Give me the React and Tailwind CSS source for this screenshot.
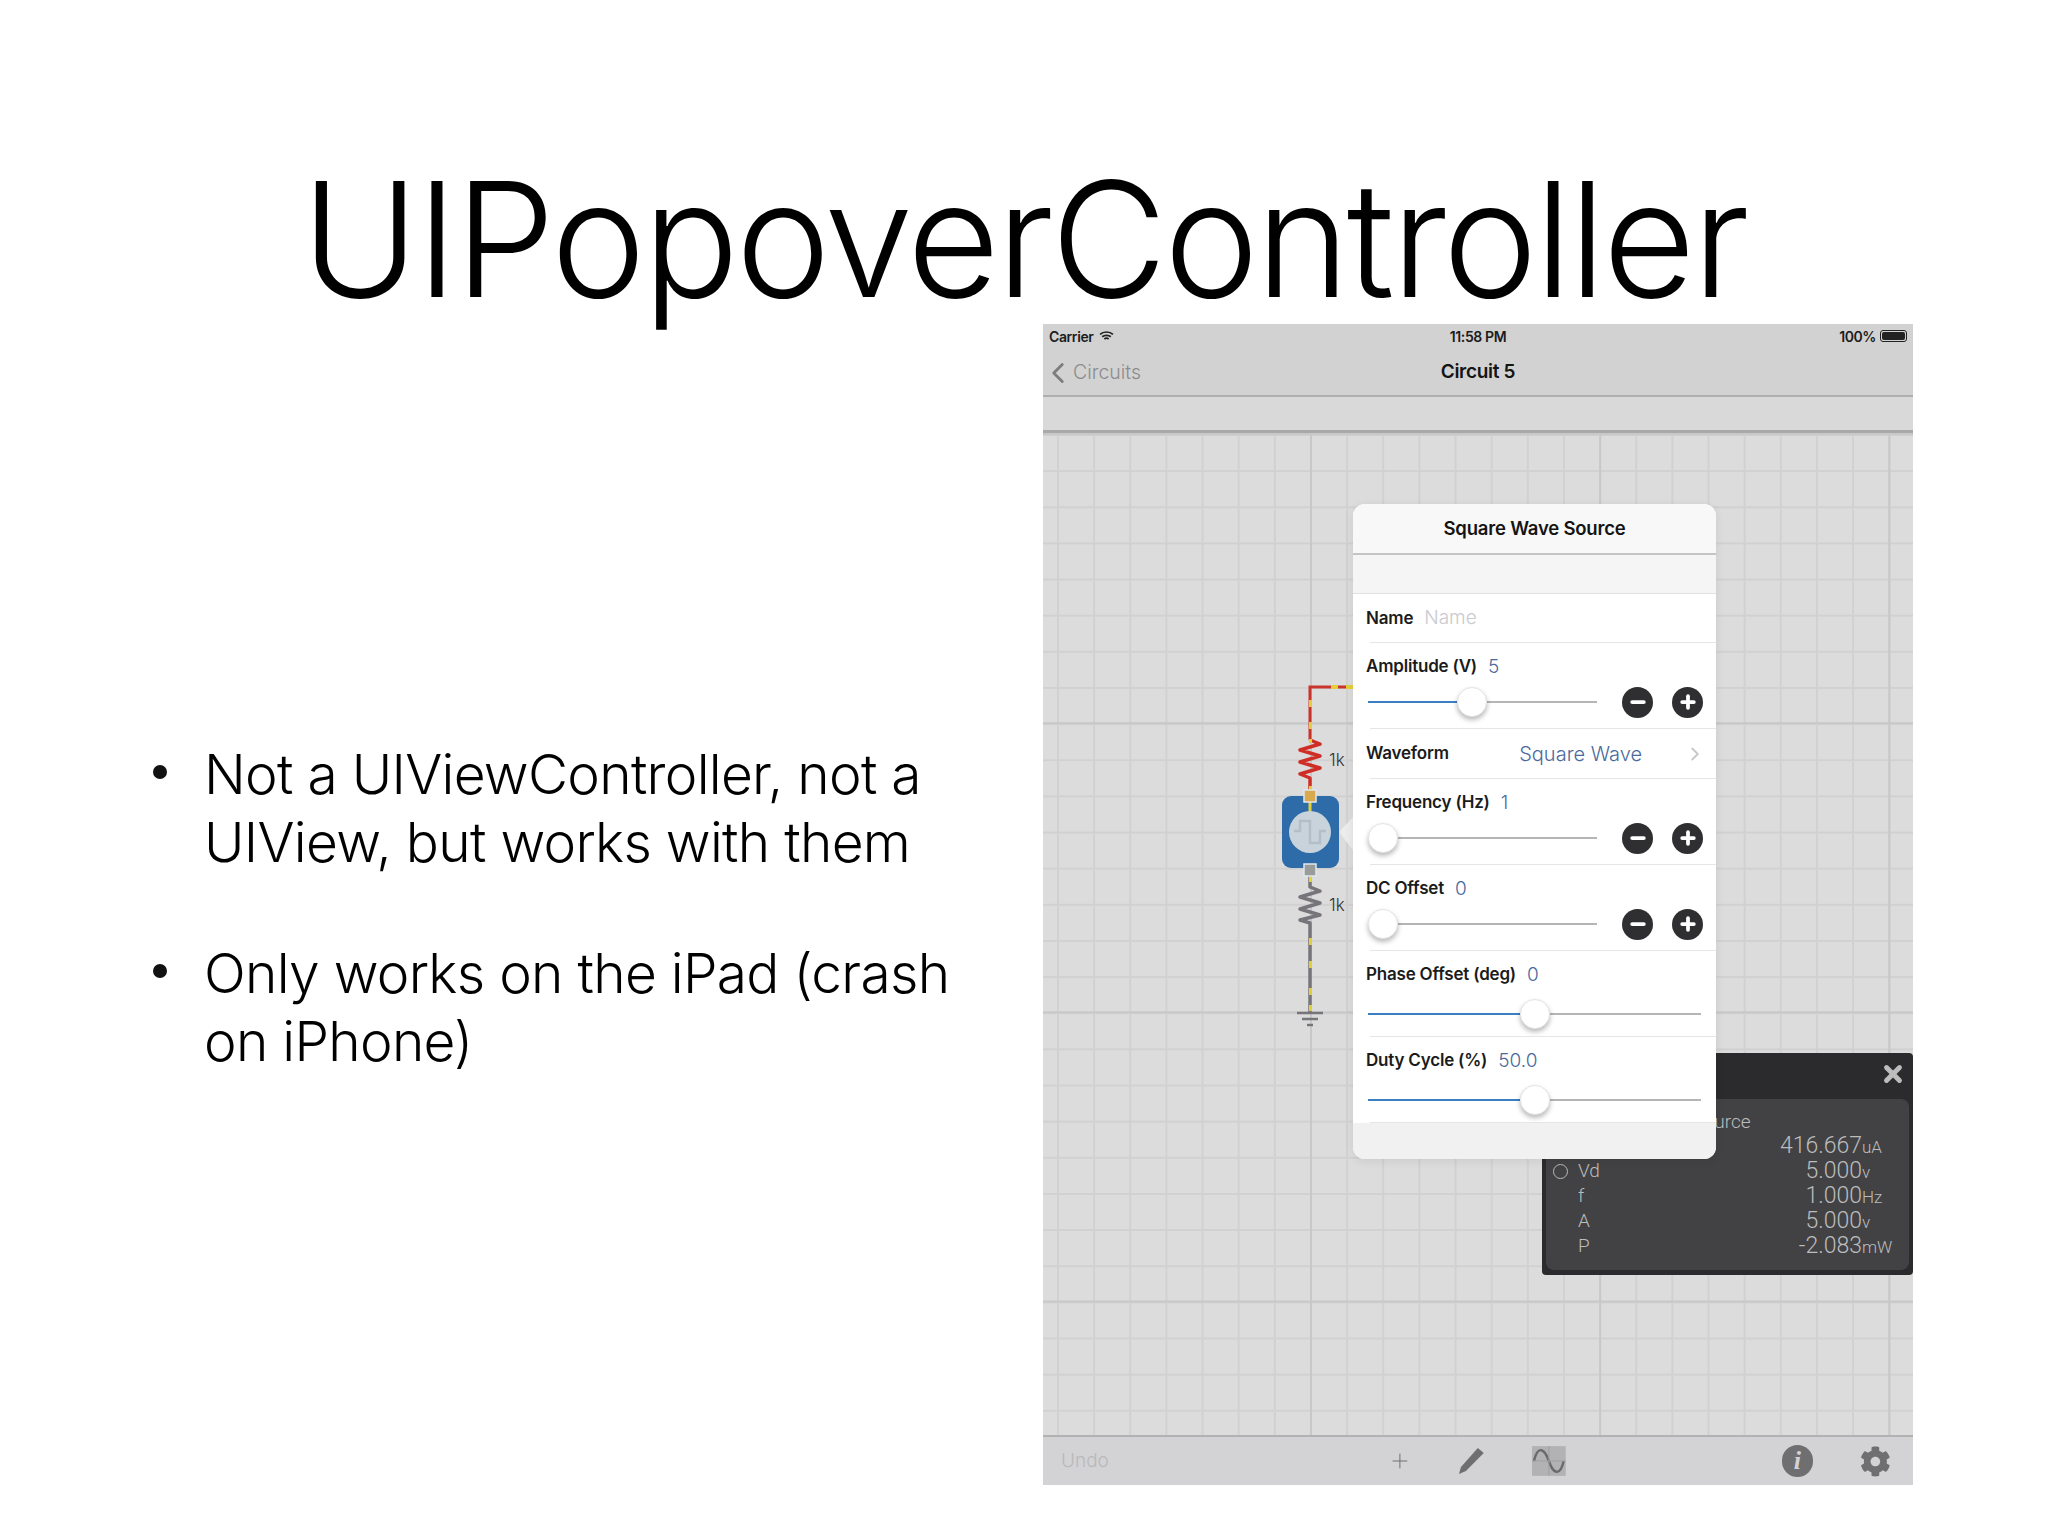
import React from 'react';
import { ChevronLeft, ChevronRight, Minus, Plus, X } from 'lucide-react';
import { FaCog } from 'react-icons/fa';

const light = "font-['Inter',sans-serif] font-light";
const panelFont = "font-['Roboto',sans-serif] font-light";

function Thumb() {
  return <div className="w-[30px] h-[30px] shrink-0 rounded-full bg-white border border-[#e4e4e4] shadow-[0_3px_5px_rgba(0,0,0,0.28)] z-10" />;
}

function Slider({ widthClass, fillClass }) {
  return (
    <div className={`flex items-center ${widthClass}`}>
      <div className={`h-[2px] bg-[#3b7fc0] ${fillClass}`} />
      <Thumb />
      <div className="h-[2px] flex-1 bg-[#b5b5b5]" />
    </div>
  );
}

function RoundButton({ Icon }) {
  return (
    <div className="w-[31px] h-[31px] rounded-full bg-[#2f2f31] flex items-center justify-center">
      <Icon size={20} strokeWidth={4.5} color="#ffffff" />
    </div>
  );
}

function Label({ children }) {
  return <span className="font-['Inter',sans-serif] font-semibold text-[17px] tracking-[-0.2px] leading-none text-[#1b1b1b]">{children}</span>;
}

function Value({ children }) {
  return <span className={`${light} text-[19px] leading-none text-[#4a6a9d]`}>{children}</span>;
}

function Separator() {
  return <div className="h-px ml-[17px] bg-[#e6e6e6]" />;
}

function SliderRow({ label, value, widthClass, fillClass, buttons }) {
  return (
    <div>
      <div className="pl-[13px] flex items-center gap-[11px] h-[46px]">
        <Label>{label}</Label>
        <Value>{value}</Value>
      </div>
      <div className={`pl-[15px] pr-[13px] flex items-center justify-between ${buttons ? 'h-[26px] mb-[13px]' : 'h-[34px] mb-[5px]'}`}>
        <Slider widthClass={widthClass} fillClass={fillClass} />
        {buttons && (
          <div className="flex gap-[19px]">
            <RoundButton Icon={Minus} />
            <RoundButton Icon={Plus} />
          </div>
        )}
      </div>
      <Separator />
    </div>
  );
}

function Popover() {
  return (
    <div className="absolute left-[310px] top-[71px] w-[363px] h-[655px] rounded-[12px] bg-white shadow-[0_2px_10px_rgba(0,0,0,0.08)] overflow-hidden z-20 flex flex-col">
      <div className="h-[51px] shrink-0 bg-[#f8f8f8] border-b-2 border-[#c4c4c4] flex items-center justify-center font-['Inter',sans-serif] font-semibold text-[18.5px] tracking-[-0.2px] text-[#141414]">
        Square Wave Source
      </div>
      <div className="h-[39px] shrink-0 bg-[#f5f5f5] border-b border-[#e2e2e2]" />
      <div className="h-[48px] pl-[13px] flex items-center gap-[11px]">
        <Label>Name</Label>
        <span className={`${light} text-[19px] text-[#c9c9ce]`}>Name</span>
      </div>
      <Separator />
      <SliderRow label="Amplitude (V)" value="5" widthClass="w-[229px]" fillClass="w-[89px]" buttons />
      <div className="h-[49px] pl-[13px] pr-[10px] flex items-center justify-between">
        <Label>Waveform</Label>
        <div className="flex items-center gap-[42px]">
          <span className={`${light} text-[20px] text-[#4a6a9d]`}>Square Wave</span>
          <ChevronRight size={22} strokeWidth={2} color="#c7c7cc" />
        </div>
      </div>
      <Separator />
      <SliderRow label="Frequency (Hz)" value="1" widthClass="w-[229px]" fillClass="w-0" buttons />
      <SliderRow label="DC Offset" value="0" widthClass="w-[229px]" fillClass="w-0" buttons />
      <SliderRow label="Phase Offset (deg)" value="0" widthClass="w-[333px]" fillClass="w-[152px]" />
      <SliderRow label="Duty Cycle (%)" value="50.0" widthClass="w-[333px]" fillClass="w-[152px]" />
      <div className="flex-1 bg-[#f1f1f1]" />
    </div>
  );
}

const readings = [
  { label: 'Vd', value: '5.000', unit: 'v', dot: true },
  { label: 'f', value: '1.000', unit: 'Hz' },
  { label: 'A', value: '5.000', unit: 'v' },
  { label: 'P', value: '-2.083', unit: 'mW' },
];

function Reading({ label, value, unit, dot }) {
  return (
    <div className="h-[25px] flex items-center">
      <div className="w-[32px] flex pl-[7px]">
        {dot && <div className="w-[15px] h-[15px] rounded-full border border-[#b9b9b9]" />}
      </div>
      <span className="text-[19px] w-[51px]">{label}</span>
      <span className="text-[23px] w-[233px] text-right">{value}</span>
      <span className="text-[17px] pt-[3px]">{unit}</span>
    </div>
  );
}

function ProbePanel() {
  return (
    <div className="absolute left-[499px] top-[620px] w-[371px] h-[222px] rounded-[4px] bg-[#2b2b2d] z-10 px-[4px] pb-[5px] flex flex-col">
      <div className="h-[46px] shrink-0 flex items-center justify-end pr-[3px] pb-[4px]">
        <X size={26} strokeWidth={4.5} color="#bdbdbd" />
      </div>
      <div className={`${panelFont} flex-1 rounded-[8px] bg-[#424244] text-[#bcbcbc] pt-[9px]`}>
        <div className="h-[26px] pl-[33px] text-[19px]">Square Wave Source</div>
        <div className="h-[25px] flex items-center">
          <span className="text-[23px] w-[316px] text-right">416.667</span>
          <span className="text-[17px] pt-[3px]">uA</span>
        </div>
        {readings.map((r) => <Reading key={r.label} {...r} />)}
      </div>
    </div>
  );
}

function Circuit() {
  return (
    <svg className="absolute left-[230px] top-[240px] z-[5]" width="130" height="370" viewBox="0 0 130 370" fill="none">
      <path d="M80 14H37V67" stroke="#c9332b" strokeWidth="3" />
      <path d="M37 67 L47 71 L27 77 L47 83 L27 89 L47 95 L27 101 L37 105 V125" stroke="#cf2e26" strokeWidth="3.5" strokeLinejoin="round" />
      <path d="M37 190 V214 L47 218 L27 224 L47 230 L27 236 L47 242 L27 247 L37 250 V340" stroke="#77757a" strokeWidth="3.5" strokeLinejoin="round" />
      <g fill="#e3cf3a">
        <rect x="58" y="12" width="7" height="4" /><rect x="73" y="12" width="7" height="4" /><rect x="36" y="27" width="3" height="7" />
        <rect x="36" y="49" width="3" height="7" /><rect x="36" y="66" width="3" height="4" /><rect x="36" y="113" width="3" height="5" />
        <rect x="36" y="202" width="3" height="7" /><rect x="36" y="265" width="3" height="7" /><rect x="36" y="288" width="3" height="7" />
        <rect x="36" y="315" width="3" height="7" /><rect x="36" y="332" width="3" height="6" />
      </g>
      <text x="56" y="93" fontFamily="Inter, sans-serif" fontSize="17" fill="#333333">1k</text>
      <text x="56" y="238" fontFamily="Inter, sans-serif" fontSize="17" fill="#333333">1k</text>
      <rect x="9" y="123" width="57" height="72" rx="9" fill="#2d6ca9" />
      <path d="M37 127V140" stroke="#e3cf3a" strokeWidth="3" />
      <circle cx="37" cy="159" r="21" fill="#c9d3dc" />
      <path d="M21 158H27V148H37V170H47V158H53" stroke="#b4bec8" strokeWidth="2.5" />
      <rect x="31" y="117" width="12" height="12" fill="#d9a94e" stroke="#dfe8f0" strokeWidth="1.5" />
      <rect x="31" y="191" width="12" height="12" fill="#9a9c9a" stroke="#dfe8f0" strokeWidth="1.5" />
      <path d="M66 159 L80 144 V177 Z" fill="#ececec" />
      <path d="M24 340H50" stroke="#77757a" strokeWidth="2.5" />
      <path d="M29 346H45" stroke="#77757a" strokeWidth="2.5" />
      <path d="M34 352H40" stroke="#77757a" strokeWidth="2.5" />
    </svg>
  );
}

function Toolbar() {
  return (
    <div className="h-[50px] shrink-0 bg-[#d3d2d4] border-t-2 border-[#b2b2b2] pl-[18px] pr-[22px] flex items-center">
      <span className={`${light} text-[19px] text-[#b9b9bc] w-[330px]`}>Undo</span>
      <Plus size={24} strokeWidth={1} color="#707072" />
      <svg className="ml-[45px]" width="28" height="28" viewBox="0 0 28 28" fill="#6f6f71">
        <path d="M21 1 L27 6 L9 24 L2 27 L4 20 Z" />
      </svg>
      <svg className="ml-[47px]" width="34" height="30" viewBox="0 0 34 30" fill="none">
        <rect width="34" height="30" fill="#b2b2b4" />
        <path d="M2 15 C6 -2 13 3 17 15 C21 27 28 32 32 15" stroke="#6a6a6c" strokeWidth="2.5" />
        <path d="M0 15H34M17 0V30" stroke="#9f9fa1" strokeWidth="1" />
      </svg>
      <div className="ml-[216px] w-[32px] h-[32px] rounded-full bg-[#6f6f71] flex items-center justify-center font-['Liberation_Serif',serif] italic font-bold text-[26px] leading-none text-[#d3d2d4]">
        i
      </div>
      <FaCog className="ml-[47px]" size={31} color="#6f6f71" />
    </div>
  );
}

function IpadScreen() {
  return (
    <div className="w-[870px] h-[1161px] flex flex-col font-['Liberation_Sans',sans-serif]">
      <div className="bg-[#d2d2d2] h-[73px] shrink-0 border-b-2 border-[#afafaf] flex flex-col">
        <div className="h-[24px] px-[6px] grid grid-cols-3 items-center text-[14px] font-['Inter',sans-serif] font-semibold tracking-[-0.4px] text-[#1c1c1c]">
          <div className="flex items-center gap-[6px]">
            <span>Carrier</span>
            <svg width="15" height="12" viewBox="0 0 14 11" fill="none" stroke="#222222" strokeWidth="1.6">
              <path d="M1 4 C4 1 10 1 13 4" /><path d="M3 6.2 C5 4.5 9 4.5 11 6.2" /><path d="M5 8.3 C6 7.5 8 7.5 9 8.3" />
            </svg>
          </div>
          <div className="text-center">11:58 PM</div>
          <div className="flex items-center justify-end gap-[4px]">
            <span>100%</span>
            <div className="w-[27px] h-[12px] rounded-[3px] border border-[#222222] p-px">
              <div className="w-full h-full rounded-[2px] bg-[#222222]" />
            </div>
          </div>
        </div>
        <div className="flex-1 relative flex items-center justify-center pt-[2px]">
          <div className={`absolute left-[1px] flex items-center text-[#8c8c8e] ${light} text-[19.5px]`}>
            <ChevronLeft size={34} strokeWidth={2} color="#7d7d7f" className="mr-[-2px] ml-[-3px]" />
            <span>Circuits</span>
          </div>
          <span className="font-['Inter',sans-serif] font-semibold text-[19px] tracking-[-0.3px] text-[#141414]">Circuit 5</span>
        </div>
      </div>
      <div className="h-[36px] shrink-0 bg-[#d9d9d9] border-b-[3px] border-[#a9a9a9]" />
      <div className="relative flex-1 bg-[#dddcdd] bg-[linear-gradient(to_right,#c8c8c8_2px,transparent_2px),linear-gradient(to_bottom,#c8c8c8_2px,transparent_2px),linear-gradient(to_right,#d2d1d2_2px,transparent_2px),linear-gradient(to_bottom,#d2d1d2_2px,transparent_2px)] bg-[size:289.2px_289.2px,289.2px_289.2px,36.15px_36.15px,36.15px_36.15px] bg-[position:267px_0,0_0,14px_0,0_1px]">
        <Circuit />
        <Popover />
        <ProbePanel />
      </div>
      <Toolbar />
    </div>
  );
}

function Bullet({ children }) {
  return (
    <li className="flex gap-[37px]">
      <span className="w-[14px] h-[14px] mt-[24px] shrink-0 rounded-full bg-[#111111]" />
      <span>{children}</span>
    </li>
  );
}

export default function App() {
  return (
    <div className={`w-[2048px] h-[1536px] bg-white text-black overflow-hidden ${light}`}>
      <div className="h-[324px] flex justify-center">
        <h1 className="mt-[155px] text-[160px] leading-[168px] tracking-[-3.2px] whitespace-nowrap font-light">UIPopoverController</h1>
      </div>
      <div className="flex pl-[153px]">
        <ul className="w-[890px] pt-[417px] text-[55px] leading-[67.6px] tracking-[-0.7px] flex flex-col gap-[64px]">
          <Bullet>Not a UIViewController, not a<br />UIView, but works with them</Bullet>
          <Bullet>Only works on the iPad (crash<br />on iPhone)</Bullet>
        </ul>
        <IpadScreen />
      </div>
    </div>
  );
}
